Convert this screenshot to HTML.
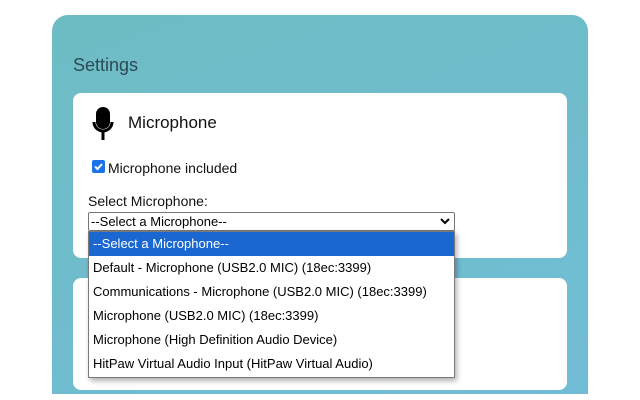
<!DOCTYPE html>
<html><head><style>
body{margin:0;width:640px;height:400px;background:#fff;font-family:"Liberation Sans",Arial,sans-serif;position:relative;overflow:hidden}
.panel{position:absolute;left:52px;top:15px;width:536px;height:379px;border-radius:16px 16px 0 0;background:linear-gradient(160deg,#6dbcc3,#72bdd6)}
.card{position:absolute;left:21px;width:494px;background:#fff;border-radius:8px}
.abs{position:absolute;white-space:nowrap}
.dd{position:absolute;left:88px;top:231px;width:365px;height:145px;background:#fff;border:1px solid #7a7a7a;box-shadow:2px 3px 5px rgba(0,0,0,.3);font-size:13px;color:#000}
.dd div{height:24px;line-height:24px;padding-left:4px}
</style></head><body>
<div class="panel">
<div class="abs" style="left:21px;top:40px;font-size:18px;color:#2c4a55">Settings</div>
<div class="card" style="top:78px;height:165px"></div>
<div class="card" style="top:263px;height:112px"></div>
</div>
<svg class="abs" style="left:90px;top:105px" width="28" height="36" viewBox="0 0 28 36">
<rect x="6" y="2" width="14" height="22" rx="7" fill="#000"/>
<path d="M4 17a9 9 0 0 0 18 0" stroke="#000" stroke-width="3" fill="none"/>
<rect x="11.5" y="26" width="3" height="9" fill="#000"/>
</svg>
<div class="abs" style="left:128px;top:113px;font-size:17px;color:#111">Microphone</div>
<div class="abs" style="left:92px;top:160px;width:13px;height:13px;background:#1a73e8;border-radius:2px"><svg width="13" height="13"><path d="M3 6.5l2.5 2.5 4.5-5" stroke="#fff" stroke-width="2" fill="none"/></svg></div>
<div class="abs" style="left:108px;top:160px;font-size:14px;color:#111">Microphone included</div>
<div class="abs" style="left:88px;top:193px;font-size:14px;color:#111">Select Microphone:</div>
<div class="abs" style="left:88px;top:212px;width:363px;height:17px;border:1px solid #767676;border-radius:2px;background:#fff;font-size:13px;line-height:17px;padding-left:2px;box-sizing:content-box">--Select a Microphone--<svg style="position:absolute;right:4px;top:5px" width="10" height="7"><path d="M1 1l4 4 4-4" stroke="#000" stroke-width="2" fill="none"/></svg></div>
<div class="dd">
<div style="background:#1a67d2;color:#fff">--Select a Microphone--</div>
<div>Default - Microphone (USB2.0 MIC) (18ec:3399)</div>
<div>Communications - Microphone (USB2.0 MIC) (18ec:3399)</div>
<div>Microphone (USB2.0 MIC) (18ec:3399)</div>
<div>Microphone (High Definition Audio Device)</div>
<div>HitPaw Virtual Audio Input (HitPaw Virtual Audio)</div>
</div>
</body></html>
